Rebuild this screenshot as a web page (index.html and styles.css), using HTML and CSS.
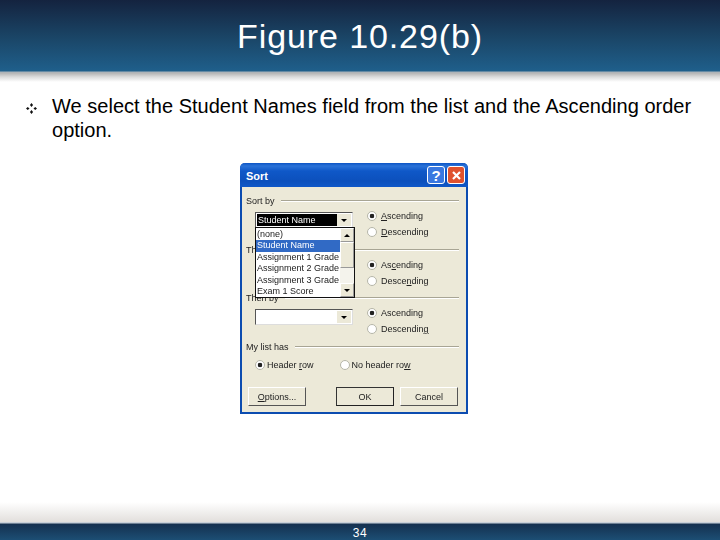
FILE: index.html
```html
<!DOCTYPE html>
<html lang="en">
<head>
<meta charset="utf-8">
<title>Figure 10.29(b)</title>
<link rel="stylesheet" href="styles.css">
</head>
<body>
<div class="slide">
  <header class="head"><h1>Figure 10.29(b)</h1></header>
  <main class="content">
    <div class="point">
      <svg class="bullet" width="11" height="11" viewBox="0 0 10 10"><path d="M5 0l1.4 1.8L5 3.6 3.6 1.8zM5 6.4l1.4 1.8L5 10 3.6 8.2zM1.6 3.6L3.2 5 1.6 6.4 0 5zM8.4 3.6L10 5 8.4 6.4 6.8 5z" fill="#111"/></svg>
      <p>We select the Student Names field from the list and the Ascending order option.</p>
    </div>
    <div class="dialog">
      <div class="titlebar">
        <span class="title">Sort</span>
        <span class="tbtn help">?</span>
        <span class="tbtn close"><svg width="11" height="11" viewBox="0 0 11 11"><path d="M2 2l7 7M9 2l-7 7" stroke="#fff" stroke-width="2.2"/></svg></span>
      </div>
      <div class="dbody">
        <section class="group">
          <div class="legend"><span>Sort by</span><i></i></div>
          <div class="row">
            <div class="combo sel"><span class="val">Student Name</span><span class="arrow"><b></b></span></div>
            <div class="radios">
              <label class="radio on"><u class="dot"></u><span><em>A</em>scending</span></label>
              <label class="radio"><u class="dot"></u><span><em>D</em>escending</span></label>
            </div>
          </div>
          <div class="list">
            <div class="items">
              <div>(none)</div>
              <div class="hi">Student Name</div>
              <div>Assignment 1 Grade</div>
              <div>Assignment 2 Grade</div>
              <div>Assignment 3 Grade</div>
              <div>Exam 1 Score</div>
            </div>
            <div class="sbar">
              <span class="sb"><b class="up"></b></span>
              <span class="thumb"></span>
              <span class="track"></span>
              <span class="sb"><b></b></span>
            </div>
          </div>
        </section>
        <section class="group">
          <div class="legend"><span>Then by</span><i></i></div>
          <div class="row">
            <div class="combo hidden"></div>
            <div class="radios">
              <label class="radio on"><u class="dot"></u><span>As<em>c</em>ending</span></label>
              <label class="radio"><u class="dot"></u><span>Desce<em>n</em>ding</span></label>
            </div>
          </div>
        </section>
        <section class="group">
          <div class="legend"><span>Then by</span><i></i></div>
          <div class="row">
            <div class="combo"><span class="val"></span><span class="arrow"><b></b></span></div>
            <div class="radios">
              <label class="radio on"><u class="dot"></u><span>Ascending</span></label>
              <label class="radio"><u class="dot"></u><span>Descendin<em>g</em></span></label>
            </div>
          </div>
        </section>
        <section class="group">
          <div class="legend"><span>My list has</span><i></i></div>
          <div class="hasrow">
            <label class="radio on"><u class="dot"></u><span>Header <em>r</em>ow</span></label>
            <label class="radio"><u class="dot"></u><span>No header ro<em>w</em></span></label>
          </div>
        </section>
        <div class="buttons">
          <span class="btn"><span><em>O</em>ptions...</span></span>
          <span class="right">
            <span class="btn def">OK</span>
            <span class="btn">Cancel</span>
          </span>
        </div>
      </div>
    </div>
  </main>
  <footer class="foot"><span>34</span></footer>
</div>
</body>
</html>
```
FILE: styles.css
```css
* { box-sizing: border-box; }
html, body { margin: 0; padding: 0; }
body { width: 720px; height: 540px; overflow: hidden; background: #fff; font-family: "Liberation Sans", Arial, sans-serif; }
.slide { width: 720px; height: 540px; display: flex; flex-direction: column; background: #fff; }
.head { height: 82px; flex: none; background: linear-gradient(to bottom, #14233f 0, #1a4465 36px, #1f5f8b 71px, #aab4bc 72px, #b4b4b4 73px, #dcdcdc 77px, #fff 82px); display: flex; justify-content: center; }
.head h1 { margin: 0; height: 72px; font-size: 34px; font-weight: 400; line-height: 73px; color: #fff; letter-spacing: 0.9px; }
.content { flex: 1; display: flex; flex-direction: column; align-items: flex-start; background: linear-gradient(to bottom, #fff 0, #fff 420px, #e2dfdc 100%); }
.point { display: flex; padding: 12px 20px 0 26px; width: 720px; }
.bullet { flex: none; margin: 9px 15px 0 0; }
.point p { margin: 0; font-size: 20px; line-height: 24px; color: #000; letter-spacing: 0.02px; }
.dialog { margin: 21px 0 0 240px; width: 228px; height: 251px; border: 2px solid #0c4cb0; border-top: 0; border-radius: 5px 5px 0 0; background: #ece9d8; filter: blur(0.4px); font-size: 9px; color: #222; display: flex; flex-direction: column; }
.titlebar { height: 24px; margin: 0 -2px; flex: none; display: flex; align-items: center; gap: 2px; padding: 0 3px 0 6px; border-radius: 5px 5px 0 0; background: linear-gradient(to bottom, #0c54c4 0, #2a72d8 3px, #0f58c8 8px, #0c50bc 18px, #0f58c8 24px); }
.title { flex: 1; color: #fff; font-size: 11px; font-weight: 700; padding-top: 2px; }
.tbtn { width: 18px; height: 18px; border: 1px solid #fff; border-radius: 3px; display: flex; align-items: center; justify-content: center; }
.help { background: #3a78e0; color: #fff; font-size: 15px; font-weight: 700; }
.close { background: #e0522e; }
.dbody { flex: 1; padding: 8px 7px 0 4px; display: flex; flex-direction: column; }
.group { position: relative; height: 48.5px; flex: none; }
.legend { display: flex; align-items: center; gap: 6px; height: 12px; }
.legend i { flex: 1; height: 2px; border-top: 1px solid #a8a594; border-bottom: 1px solid #fff; }
.row { display: flex; align-items: flex-start; padding: 5px 0 0 9px; }
.combo { width: 98px; height: 16px; flex: none; background: #fff; border: 1px solid #555; border-right-color: #ddd; border-bottom-color: #ddd; display: flex; padding: 1px; }
.combo.hidden { visibility: hidden; }
.val { flex: 1; line-height: 12px; padding-left: 1px; }
.sel .val { background: #000; color: #fff; }
.arrow { width: 14px; flex: none; background: #ece9d8; display: flex; align-items: center; justify-content: center; }
.arrow b, .sb b { display: block; width: 0; height: 0; border: 3px solid transparent; border-top-color: #000; border-bottom: 0; }
.sb b.up { border-top: 0; border-bottom: 3px solid #000; }
.radios { display: flex; flex-direction: column; gap: 4px; margin-left: 14px; margin-top: -2px; }
.radio { display: flex; align-items: center; gap: 4px; height: 12px; }
em { font-style: normal; text-decoration: underline; }
.dot { width: 10px; height: 10px; flex: none; border-radius: 50%; background: #fff; border: 1px solid #b5b5a8; }
.on .dot { background: radial-gradient(circle, #222 0, #222 2px, #fff 2.6px); }
.list { position: absolute; left: 9px; top: 32px; width: 100px; height: 71px; z-index: 2; display: flex; background: #fff; border: 1px solid #111; }
.items { flex: 1; line-height: 11.4px; padding-top: 1px; overflow: hidden; }
.items div { padding-left: 1px; height: 11.4px; white-space: nowrap; }
.items .hi { background: #316ac5; color: #fff; }
.sbar { width: 14px; flex: none; display: flex; flex-direction: column; background: #f4f3ec; }
.sb { height: 14px; flex: none; background: #ece9d8; border: 1px solid #fff; border-right-color: #999; border-bottom-color: #999; display: flex; align-items: center; justify-content: center; }
.thumb { height: 26px; flex: none; background: #ece9d8; border: 1px solid #fff; border-right-color: #999; border-bottom-color: #999; }
.track { flex: 1; }
.hasrow { display: flex; gap: 26px; padding: 6px 0 0 9px; }
.hasrow .radio { gap: 2px; }
.buttons { display: flex; justify-content: space-between; padding: 2px 1px 0 2px; margin-top: -4px; }
.right { display: flex; gap: 6px; }
.btn { width: 58px; height: 19px; display: flex; align-items: center; justify-content: center; background: #ece9d8; border: 1px solid #fff; border-right-color: #555; border-bottom-color: #555; }
.btn.def { border-color: #333; border-right-color: #222; border-bottom-color: #222; }
.foot { height: 18px; flex: none; background: linear-gradient(to bottom, #c9d0d8 0, #c9d0d8 1px, #14304f 2px, #1c4e74 100%); display: flex; justify-content: center; color: #fff; font-size: 12px; letter-spacing: 0.5px; line-height: 23px; }
```
